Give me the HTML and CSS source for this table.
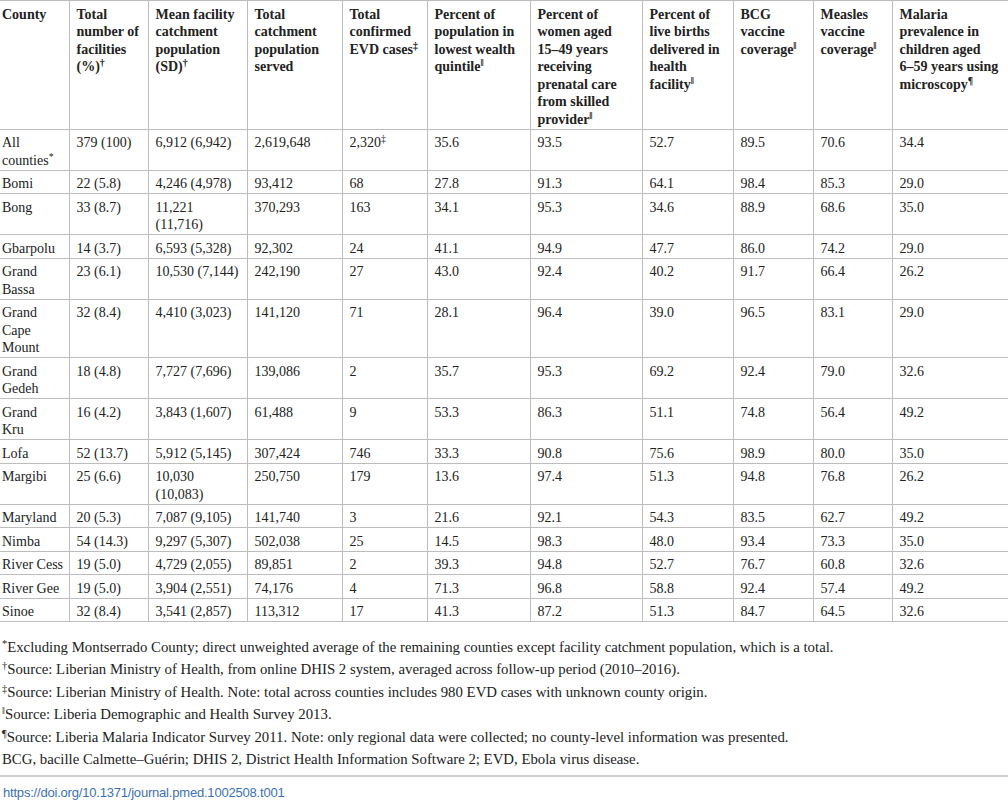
FILE: index.html
```html
<!DOCTYPE html>
<html lang="en">
<head>
    <meta charset="UTF-8">
    <title>Table 1. County characteristics, Liberia</title>
    <link rel="stylesheet" href="styles.css">
</head>
<body>
    <table class="data">
        <colgroup>
            <col class="c1"><col class="c2"><col class="c3"><col class="c4"><col class="c5"><col class="c6">
            <col class="c7"><col class="c8"><col class="c9"><col class="c10"><col class="c11">
        </colgroup>
        <thead>
            <tr>
                <th>County</th>
                <th>Total<br>number of<br>facilities<br>(%)<sup>†</sup></th>
                <th>Mean facility<br>catchment<br>population<br>(SD)<sup>†</sup></th>
                <th>Total<br>catchment<br>population<br>served</th>
                <th>Total<br>confirmed<br>EVD cases<sup>‡</sup></th>
                <th>Percent of<br>population in<br>lowest wealth<br>quintile<sup>‖</sup></th>
                <th>Percent of<br>women aged<br>15–49 years<br>receiving<br>prenatal care<br>from skilled<br>provider<sup>‖</sup></th>
                <th>Percent of<br>live births<br>delivered in<br>health<br>facility<sup>‖</sup></th>
                <th>BCG<br>vaccine<br>coverage<sup>‖</sup></th>
                <th>Measles<br>vaccine<br>coverage<sup>‖</sup></th>
                <th>Malaria<br>prevalence in<br>children aged<br>6–59 years using<br>microscopy<sup>¶</sup></th>
            </tr>
        </thead>
        <tbody>
            <tr><td>All<br>counties<sup>*</sup></td><td>379 (100)</td><td>6,912 (6,942)</td><td>2,619,648</td><td>2,320<sup>‡</sup></td><td>35.6</td><td>93.5</td><td>52.7</td><td>89.5</td><td>70.6</td><td>34.4</td></tr>
            <tr><td>Bomi</td><td>22 (5.8)</td><td>4,246 (4,978)</td><td>93,412</td><td>68</td><td>27.8</td><td>91.3</td><td>64.1</td><td>98.4</td><td>85.3</td><td>29.0</td></tr>
            <tr><td>Bong</td><td>33 (8.7)</td><td>11,221<br>(11,716)</td><td>370,293</td><td>163</td><td>34.1</td><td>95.3</td><td>34.6</td><td>88.9</td><td>68.6</td><td>35.0</td></tr>
            <tr><td>Gbarpolu</td><td>14 (3.7)</td><td>6,593 (5,328)</td><td>92,302</td><td>24</td><td>41.1</td><td>94.9</td><td>47.7</td><td>86.0</td><td>74.2</td><td>29.0</td></tr>
            <tr><td>Grand<br>Bassa</td><td>23 (6.1)</td><td>10,530 (7,144)</td><td>242,190</td><td>27</td><td>43.0</td><td>92.4</td><td>40.2</td><td>91.7</td><td>66.4</td><td>26.2</td></tr>
            <tr><td>Grand<br>Cape<br>Mount</td><td>32 (8.4)</td><td>4,410 (3,023)</td><td>141,120</td><td>71</td><td>28.1</td><td>96.4</td><td>39.0</td><td>96.5</td><td>83.1</td><td>29.0</td></tr>
            <tr><td>Grand<br>Gedeh</td><td>18 (4.8)</td><td>7,727 (7,696)</td><td>139,086</td><td>2</td><td>35.7</td><td>95.3</td><td>69.2</td><td>92.4</td><td>79.0</td><td>32.6</td></tr>
            <tr><td>Grand<br>Kru</td><td>16 (4.2)</td><td>3,843 (1,607)</td><td>61,488</td><td>9</td><td>53.3</td><td>86.3</td><td>51.1</td><td>74.8</td><td>56.4</td><td>49.2</td></tr>
            <tr><td>Lofa</td><td>52 (13.7)</td><td>5,912 (5,145)</td><td>307,424</td><td>746</td><td>33.3</td><td>90.8</td><td>75.6</td><td>98.9</td><td>80.0</td><td>35.0</td></tr>
            <tr><td>Margibi</td><td>25 (6.6)</td><td>10,030<br>(10,083)</td><td>250,750</td><td>179</td><td>13.6</td><td>97.4</td><td>51.3</td><td>94.8</td><td>76.8</td><td>26.2</td></tr>
            <tr><td>Maryland</td><td>20 (5.3)</td><td>7,087 (9,105)</td><td>141,740</td><td>3</td><td>21.6</td><td>92.1</td><td>54.3</td><td>83.5</td><td>62.7</td><td>49.2</td></tr>
            <tr><td>Nimba</td><td>54 (14.3)</td><td>9,297 (5,307)</td><td>502,038</td><td>25</td><td>14.5</td><td>98.3</td><td>48.0</td><td>93.4</td><td>73.3</td><td>35.0</td></tr>
            <tr><td>River Cess</td><td>19 (5.0)</td><td>4,729 (2,055)</td><td>89,851</td><td>2</td><td>39.3</td><td>94.8</td><td>52.7</td><td>76.7</td><td>60.8</td><td>32.6</td></tr>
            <tr><td>River Gee</td><td>19 (5.0)</td><td>3,904 (2,551)</td><td>74,176</td><td>4</td><td>71.3</td><td>96.8</td><td>58.8</td><td>92.4</td><td>57.4</td><td>49.2</td></tr>
            <tr><td>Sinoe</td><td>32 (8.4)</td><td>3,541 (2,857)</td><td>113,312</td><td>17</td><td>41.3</td><td>87.2</td><td>51.3</td><td>84.7</td><td>64.5</td><td>32.6</td></tr>
        </tbody>
    </table>

    <div class="notes">
        <p><sup>*</sup>Excluding Montserrado County; direct unweighted average of the remaining counties except facility catchment population, which is a total.</p>
        <p><sup>†</sup>Source: Liberian Ministry of Health, from online DHIS 2 system, averaged across follow-up period (2010–2016).</p>
        <p><sup>‡</sup>Source: Liberian Ministry of Health. Note: total across counties includes 980 EVD cases with unknown county origin.</p>
        <p><sup>‖</sup>Source: Liberia Demographic and Health Survey 2013.</p>
        <p><sup>¶</sup>Source: Liberia Malaria Indicator Survey 2011. Note: only regional data were collected; no county-level information was presented.</p>
        <p>BCG, bacille Calmette–Guérin; DHIS 2, District Health Information Software 2; EVD, Ebola virus disease.</p>
    </div>

    <div class="doi">
        <a href="#">https://doi.org/10.1371/journal.pmed.1002508.t001</a>
    </div>
</body>
</html>
```

FILE: styles.css
```css
body {
    margin: 0;
    background: #fff;
    color: #222;
    font-family: "Liberation Serif", "Times New Roman", serif;
    font-size: 14px;
}
.data {
    width: 1008px;
    border-collapse: collapse;
    table-layout: fixed;
}
.c1 { width: 69px; }
.c2 { width: 79px; }
.c3 { width: 99px; }
.c4 { width: 95px; }
.c5 { width: 85px; }
.c6 { width: 103px; }
.c7 { width: 112px; }
.c8 { width: 91px; }
.c9 { width: 80px; }
.c10 { width: 79px; }
.c11 { width: 116px; }
.data th,
.data td {
    border: 1px solid #bdbdbd;
    padding: 4.5px 2px 0.5px 7px;
    line-height: 17.5px;
    text-align: left;
    vertical-align: top;
    white-space: nowrap;
    overflow: hidden;
}
.data th {
    font-weight: bold;
}
.data th:first-child,
.data td:first-child {
    border-left: none;
    padding-left: 2px;
}
.data th:last-child,
.data td:last-child {
    border-right: none;
}
sup {
    font-size: 0.7em;
    line-height: 0;
    vertical-align: 0.5em;
}
.notes {
    margin-top: 14px;
    padding-left: 2px;
    font-size: 14.8px;
}
.notes p {
    margin: 0;
    line-height: 22.4px;
}
.doi {
    margin-top: 5px;
    border-top: 2px solid #cfcfcf;
    padding-top: 8px;
    padding-left: 3px;
    font-family: "Liberation Sans", Arial, sans-serif;
    font-size: 13px;
    letter-spacing: -0.2px;
}
.doi a {
    color: #3b71b6;
    text-decoration: none;
}
```
